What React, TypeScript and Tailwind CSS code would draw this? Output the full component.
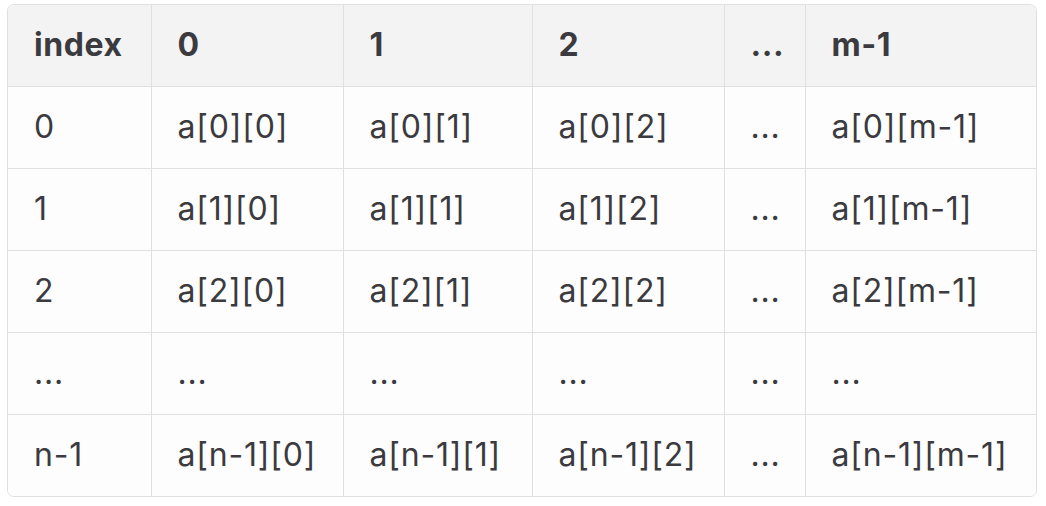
import React from 'react';

const header = ['index', '0', '1', '2', '...', 'm-1'];

const rows: string[][] = [
  ['0', 'a[0][0]', 'a[0][1]', 'a[0][2]', '...', 'a[0][m-1]'],
  ['1', 'a[1][0]', 'a[1][1]', 'a[1][2]', '...', 'a[1][m-1]'],
  ['2', 'a[2][0]', 'a[2][1]', 'a[2][2]', '...', 'a[2][m-1]'],
  ['...', '...', '...', '...', '...', '...'],
  ['n-1', 'a[n-1][0]', 'a[n-1][1]', 'a[n-1][2]', '...', 'a[n-1][m-1]'],
];

// column widths including the right border line
const widths = ['w-[143px]', 'w-[192px]', 'w-[189px]', 'w-[192px]', 'w-[81px]', 'w-[233px]'];

export default function App() {
  return (
    <div className="min-h-screen bg-white pt-[4px] pl-[7px] font-['Inter',sans-serif] text-[#3a3a3f]">
      <div className="w-[1030px] overflow-hidden rounded-[7px] border border-[#e0e0e0]">
        <table className="w-full table-fixed border-collapse">
          <colgroup>
            {widths.map((w, i) => (
              <col key={i} className={w} />
            ))}
          </colgroup>
          <thead>
            <tr className="h-[81px] bg-[#f3f3f3]">
              {header.map((h, i) => (
                <th
                  key={i}
                  className="border-l border-[#e0e0e0] px-[26px] text-left text-[32px] font-bold tracking-[0.6px] first:border-l-0"
                >
                  {h}
                </th>
              ))}
            </tr>
          </thead>
          <tbody>
            {rows.map((r, ri) => (
              <tr key={ri} className="h-[82px] border-t border-[#e0e0e0] bg-[#fdfdfd]">
                {r.map((c, ci) => (
                  <td
                    key={ci}
                    className="whitespace-nowrap border-l border-[#e0e0e0] px-[26px] text-left text-[32px] tracking-[0.8px] first:border-l-0"
                  >
                    {c}
                  </td>
                ))}
              </tr>
            ))}
          </tbody>
        </table>
      </div>
    </div>
  );
}
